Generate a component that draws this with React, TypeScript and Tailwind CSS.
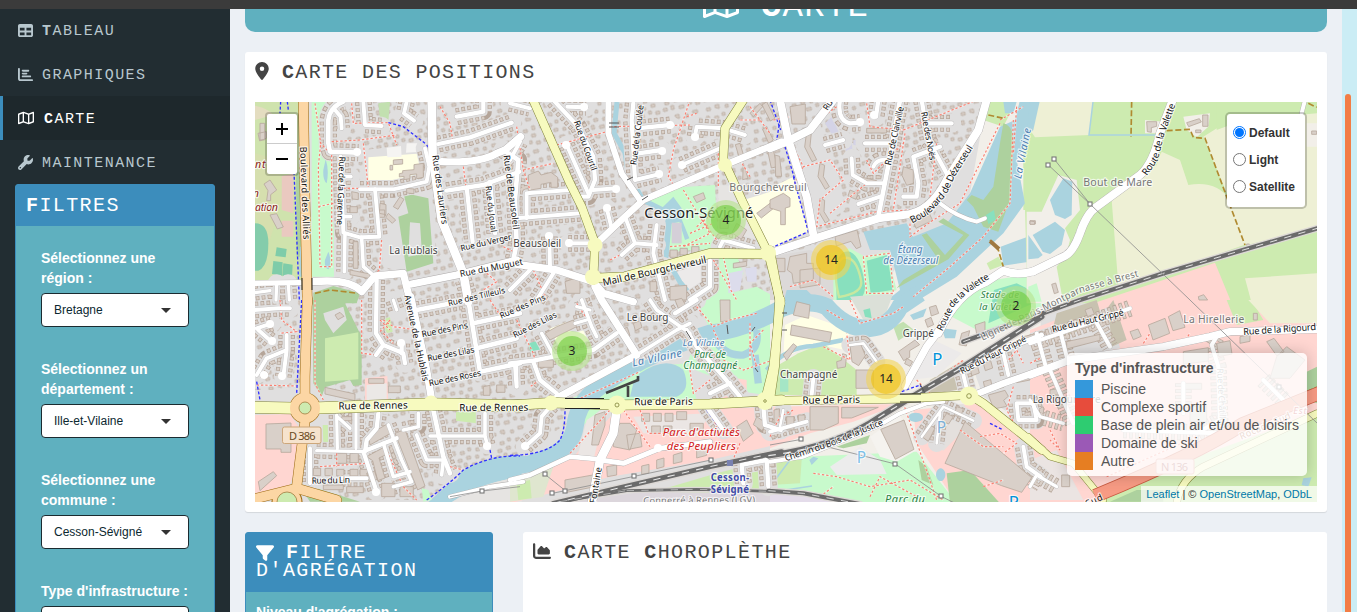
import React from "react";
import { FaTable, FaChartBar, FaRegMap, FaWrench, FaLocationDot, FaFilter, FaChartArea } from "react-icons/fa6";

type Pair = [string, string];
type Road = [string, number];
type Label = { t: string; p: number[]; s?: number; c?: string; i?: boolean; b?: boolean };
type Tile = {
  x: number;
  y: number;
  areas?: Pair[];
  buildings?: string;
  minor?: Road[];
  major?: Road[];
  yellow?: Road[];
  orange?: Road[];
  rail?: Road[];
  foot?: string;
  cycle?: string;
  track?: string;
  power?: string;
  labels?: Label[];
};

const PARK = "#c8facc";
const WOOD = "#add19e";
const GRASS = "#cdebb0";
const WATER = "#aad3df";
const FARM = "#eef0d5";
const LAND = "#f2efe9";
const RES = "#e0dfdf";
const RETAIL = "#ffd6d1";
const SCHOOL = "#ffffe5";
const PITCH = "#88e0be";
const BLUE = "#4d80b3";

const tiles: Tile[] = [
  {
    x: 250, y: 100,
    areas: [
      ["M0 0H160V545H0Z", "#cfe3ad"],
      ["M0 15Q50 20 70 45L15 60Z", "#e4ddc0"],
      ["M15 160L90 180L95 300L60 420L15 350Z", "#d6dfae"],
      ["M138 215H160V470H140Z", WOOD],
      ["M15 370Q55 370 55 430Q55 500 25 512L15 512Z", "#84ccab"],
      ["M80 442L110 447L107 472L76 468ZM70 483L98 487L96 527L66 522ZM100 490L128 494L126 531L97 527Z", "#7fcca9"],
      ["M95 228L130 222L130 340L95 330ZM95 362H130V410H95Z", "#eac9c0"],
      ["M185 5H280L235 70V150L252 168V530H185Z", PARK],
      ["M227 178Q238 210 230 250Q218 240 220 210ZM235 455Q246 480 236 508Q222 505 225 480ZM150 440H160V530H148Z", WATER],
      ["M340 150L540 130L545 240L430 265L335 262Z", RES],
      ["M385 270L545 260L560 500L470 520L400 500L390 420Z", RES],
      ["M355 172L520 160L532 240L430 258L355 242Z", SCHOOL],
      ["M460 278L535 295L550 490L470 515L445 350L475 340Z", WOOD],
      ["M480 367L510 370L516 462L475 470Z", RES],
      ["M385 10L420 5L415 65L390 60Z", "#c2e0b0"],
      ["M190 578L250 558L330 580L320 610L190 610Z", WOOD],
      ["M410 143L453 138L455 170L412 172ZM470 130L525 130L510 155L468 158Z", "#f5f4f2"],
    ],
    buildings: "M430 180l28 -2v14l-28 2zM458 212l34 -3v-15l28 -4v42l-20 4v-14l-20 2v12l-18 3v-10l-14 2v-10l10 -2zM420 196h8v14h-8zM30 70h14v50h-14zM24 100l25 -5v20l-20 8zM60 240l20 30l-18 14v18h-12l4 -30l-12 -20zM450 290l12 8l-18 30l-14 -8zM415 340l22 20l-10 10l-20 -18zM390 310l18 4v30l-20 -4zM470 265l22 2v14l-22 -2zM305 275l20 4v20l-18 -2zM300 320h22v18h-22zM60 345l20 -4l20 40l-18 6zM310 425h14v80h-14zM300 510l60 12v14l-60 -12zM380 330l24 0v22h-24z",
    minor: [
      ["M235 130L235 60Q240 20 280 5M235 130L240 155L325 158", 14],
      ["M255 30L272 50L275 85M340 5L345 75L395 78M470 5L462 40L492 62", 12],
      ["M330 268H430L530 245L538 200L525 145", 12],
      ["M375 268L388 410L330 412L280 398L272 170", 12],
      ["M285 400L283 515M335 412L340 500L375 530M275 230H303M272 350H302", 11],
      ["M590 272L700 255L808 215M650 262L668 425M720 245L735 400", 13],
      ["M565 132L660 112L785 68M620 50L700 35L700 5", 13],
      ["M15 578L60 572M80 550L78 600M115 550L118 600", 10],
      ["M760 150L805 180L795 300L800 430L790 480", 14],
    ],
    major: [
      ["M545 0L548 170L575 360L640 520L655 605", 26],
      ["M575 185Q690 190 740 160L765 150L812 110", 22],
      ["M190 545Q300 535 335 575L375 528L460 520L482 610", 22],
      ["M485 552L620 525L800 480", 22],
      ["M0 550L150 548", 16],
    ],
    orange: [["M160 0L165 300L172 610", 28]],
    foot: "M195 10L212 130L245 165V500H210L205 200L212 130M245 125L330 120L440 105M305 10L310 70L415 68L440 135M340 130L350 220L355 265M280 265L330 265M395 420L388 510L350 545M570 20L600 70L608 120M640 200L648 260M600 420L620 470M205 320L250 310M710 520L740 545L700 570M760 440L790 455",
    cycle: "M92 5L90 40M112 5L115 30M132 215L148 600M415 68L460 80L525 130M530 135L548 160",
    track: "M195 580L240 570L325 580",
    labels: [
      { t: "Boulevard des Alliés", p: [160, 140, 170, 418], s: 28 },
      { t: "Rue de la Garenne", p: [277, 170, 270, 375], s: 26 },
      { t: "Rue des Lauriers", p: [556, 165, 585, 372], s: 27 },
      { t: "Rue de Beausoleil", p: [770, 165, 799, 388], s: 27 },
      { t: "Rue du Joual", p: [715, 258, 732, 396], s: 25 },
      { t: "Rue du Verger", p: [632, 445, 784, 410], s: 25 },
      { t: "Rue du Muguet", p: [630, 522, 818, 484], s: 27 },
      { t: "Rue des Tilleuls", p: [594, 610, 765, 570], s: 25 },
      { t: "La Hublais", p: [418, 452, 563, 452], s: 30, c: "#444" },
      { t: "nt", p: [15, 193, 47, 193], s: 32, c: "#8b1a1a", i: true },
      { t: "n", p: [8, 280, 24, 280], s: 32, c: "#8b1a1a", i: true },
      { t: "ation", p: [15, 322, 84, 322], s: 32, c: "#8b1a1a", i: true },
      { t: "Beausoleil", p: [790, 430, 933, 430], s: 30, c: "#444" },
    ],
  },
  {
    x: 250, y: 300,
    areas: [
      ["M188 0H280L335 110L335 255L310 258L300 240L225 262L215 290L190 250Z", WOOD],
      ["M225 115L325 97V238L225 245Z", GRASS],
      ["M220 40L280 20L290 60L250 100L225 60Z", RES],
      ["M15 345L120 342L145 380L140 500L110 580L15 600Z", RETAIL],
      ["M155 500L170 470L190 562L330 605H180L150 560Z", WOOD],
      ["M385 60L420 52L428 95L388 105ZM218 375L240 375L250 430L220 430ZM618 335L685 335L680 370L618 362Z", GRASS],
      ["M345 235L412 228L415 310L345 312Z", "#ffd6d1"],
      ["M350 255L410 250V305L350 310Z", "#ebe8e6"],
      ["M530 610Q600 550 640 510Q720 465 815 465V535Q700 540 600 610Z", WATER],
      ["M600 610Q700 545 815 530V610Z", "#e6e4e2"],
      ["M515 565L535 570L545 600L520 605Z", PARK],
    ],
    buildings: "M48 372l75 -3v88h-30v-10h-45zM25 545l45 -30l10 12l-50 45zM255 45l15 -8l12 12l-18 10zM225 262l90 20v20l-90 -20zM356 236h46v14h-46zM415 258h36v20h-36zM480 375l20 -5v20l-18 5zM355 405l60 -35l15 25l-70 40zM350 470l55 -30l12 20l-30 14l18 60l-22 8l-15 -60zM435 400l30 -12l60 170l-22 12l-20 -50zM260 460l30 0v30h-30zM300 460h25v28h-25zM190 505h22v22h-22zM225 505h22v22h-22zM260 508h22v20h-22zM300 508h24v20h-24zM330 508h24v20h-24zM220 555h60v14h-60zM290 560h50v18h-50zM395 550l40 0v40h-40zM450 560h40v30h-40zM350 520l24 -6l8 24l-24 8zM275 350h30v12h-30zM700 260l20 -4v30h-20zM740 255h25v22h-25z",
    minor: [
      ["M380 -60L378 100L400 135L460 160L465 190M378 165L400 135M455 160V130", 13],
      ["M500 30L655 0L690 215L810 190M670 70L810 40M680 145L800 115M660 0L640 -60", 14],
      ["M260 345L262 445M200 452L340 455M318 340V445M262 350L300 385", 10],
      ["M345 455L350 420L380 385L385 340M345 452L440 415M340 455L365 530L380 575", 13],
      ["M415 375L455 480L485 545L430 560M400 430L430 530L480 515", 11],
      ["M550 330L580 470L600 520", 14],
      ["M500 405L530 480L580 480L575 525M540 408H705V340M705 408L712 435M460 390L505 380V340", 11],
      ["M180 445V550M275 535H350", 12],
      ["M15 30L85 25L120 25M20 85L65 70M25 90L65 125", 12],
      ["M110 105V150L50 175L20 225M110 150L100 230", 12],
      ["M430 0L440 30M800 190L800 250", 10],
    ],
    major: [
      ["M482 -10L530 210L545 300", 22],
      ["M600 590L720 560L820 545", 12],
    ],
    orange: [["M172 -5L165 230L165 325L165 365L150 480L140 560L110 600M20 595L140 565L260 600", 28]],
    yellow: [["M0 322L165 325L545 312L815 318", 34]],
    foot: "M195 0L195 250L220 300M335 0L335 160L380 165M90 0L95 60L140 95L90 100M400 60L430 80L500 90M400 100L430 130M20 255L140 258M210 500L350 490L380 560M260 460V500M340 455L400 430L460 560L500 600M600 500L640 510M20 590L70 580M720 0L760 60M390 60L420 90M420 60L390 95",
    cycle: "M155 0L140 280M20 245L30 300M530 600Q600 550 640 510Q720 465 810 468M720 450L725 475",
    power: "M600 590L697 573L810 560",
    labels: [
      { t: "Avenue de la Hublais", p: [472, -15, 528, 243], s: 27 },
      { t: "Rue des Pins", p: [515, 103, 653, 75], s: 26 },
      { t: "Rue des Lilas", p: [532, 175, 673, 148], s: 26 },
      { t: "Rue des Roses", p: [537, 250, 693, 218], s: 26 },
      { t: "Rue des Pins", p: [750, 48, 885, -10], s: 25 },
      { t: "Rue de Rennes", p: [265, 318, 473, 315], s: 30 },
      { t: "Rue de Rennes", p: [628, 323, 835, 322], s: 30 },
      { t: "Rue du Lin", p: [185, 542, 300, 539], s: 26 },
    ],
  },
  {
    x: 510, y: 100,
    areas: [
      ["M405 300L510 262L615 255L625 445L480 455L465 340Z", PARK],
      ["M610 475L680 465L700 520L660 600H600Z", PARK],
      ["M455 325L490 290L515 325L512 350L538 415L525 420L508 365L485 372L475 475L462 470L460 380L470 350Z", WATER],
      ["M485 368H515V430H485Z", "#d4cfd8"],
      ["M490 520L600 480L595 560L540 600Z", "#eceaea"],
      ["M700 300L815 265V440H775Z", SCHOOL],
      ["M655 520L700 510L690 570L655 580ZM705 505L740 500V545H712Z", "#dcdcec"],
      ["M660 580L740 560L812 600V620H640Z", PARK],
      ["M625 255L690 260L755 420L625 440Z", "#e6e4e2"],
    ],
    buildings: "M55 225l30 -12l8 12l30 -8l20 15v30h-20v-15l-30 6v12l-38 6zM630 355h25v30h-25zM680 370l30 20l-16 28l-28 -20zM770 5l25 50l-14 8l-25 -48zM720 40l30 -30l8 10l-28 30zM690 130l12 40l-14 4l-12 -40zM700 190l14 45l-16 4zM770 80l20 40l-14 10l-18 -42zM790 150l12 50l-18 4l-10 -46zM740 340l40 -30l12 14l-38 30zM480 560l50 -4v44h-50zM165 545l45 -15v50h-40zM480 450h22v22h-22zM510 445h22v20h-22zM545 440h22v20h-22zM420 545h20v30h-20zM670 490l40 -6v14l-40 6zM550 290l30 -12l6 18l-26 12z",
    minor: [
      ["M130 0L205 80L250 170L255 240L235 290L215 290", 13],
      ["M170 135L235 280M250 270L320 265M172 20L228 22M0 10L60 25", 12],
      ["M50 355V280L180 270M20 355L210 340M118 410L120 500M175 430L240 430", 12],
      ["M290 325L305 385M345 350L375 430L440 435M335 465L375 430M440 375L430 460L465 600", 12],
      ["M370 10L365 60L375 240L450 222M380 85L480 75M385 160L455 150", 13],
      ["M515 195L630 145M555 110L560 80L640 85L705 105", 12],
      ["M0 180L30 125M0 570L60 510M80 600L130 520M630 440L640 420L730 445M600 480L600 560L540 600", 12],
    ],
    major: [
      ["M295 0V100L335 220L390 300", 18],
      ["M255 435L345 350L400 300L620 205L815 125", 20],
      ["M0 490L140 510L250 545L280 580L370 605", 22],
    ],
    yellow: [
      ["M65 -10L180 250L215 320L255 430L250 540", 24],
      ["M250 535L345 530L600 460L780 462", 27],
      ["M700 0L645 85L640 180L700 310L775 460L812 610", 24],
    ],
    foot: "M140 135L290 95M20 80L40 210L60 270M40 210L130 190M300 80L540 75M540 0L490 150L475 230L500 270M625 160L625 260M520 270L600 400L520 440M570 350L620 420M540 400L610 370M480 440L600 430M720 20L780 100M750 60L690 60M300 480L330 465M70 510L110 600M610 480L680 600M560 380L620 330M640 470L660 560M530 50L560 40M690 180L720 230",
    cycle: "M780 0L812 90",
    labels: [
      { t: "Rue du Courtil", p: [200, 62, 253, 210], s: 26 },
      { t: "Rue de la Coulée", p: [370, 195, 392, 15], s: 26 },
      { t: "Mail de Bourgchevreuil", p: [278, 548, 588, 478], s: 30 },
      { t: "Cesson-Sévigné", p: [403, 338, 730, 338], s: 44, c: "#222" },
      { t: "Bourgchevreuil", p: [658, 262, 890, 262], s: 32, c: "#777" },
    ],
  },
  {
    x: 510, y: 300,
    areas: [
      ["M560 0L815 -20L800 290L700 275L620 235L530 200L545 150L480 140L600 90Z", PARK],
      ["M175 300L380 205L530 190L560 300L290 312L210 385L195 380Z", PARK],
      ["M190 470L320 330L815 322V430L600 480L300 530L120 580L0 610V560Z", RETAIL],
      ["M680 235L710 240V290L600 300V280Z", "#ffd6d1"],
      ["M330 605L620 520L815 470V605Z", GRASS],
      ["M0 545L130 500L100 590L0 605Z", "#dfe6cf"],
      ["M150 610L400 575L815 580V610Z", "#dcd6dc"],
      ["M390 220Q470 165 520 210Q545 270 500 290H360L370 250Z", WATER],
      ["M95 95L210 50L240 120L120 170Z", SCHOOL],
      ["M55 130L95 120L97 155L62 160Z", PITCH],
      ["M500 20L545 0V110L510 70Z", "#dcdcec"],
      ["M230 360L290 320L250 480H200ZM370 350L600 340L560 410L400 400Z", "#ebe6e4"],
      ["M20 550L60 540L65 595L25 600Z", GRASS],
    ],
    buildings: "M105 100l35 -20l50 -20l10 20l-80 40zM85 180h45v22h-45zM330 90l22 -8l8 25l-20 10zM370 70l20 -8l6 20l-20 10zM495 0l20 -5l12 20l-22 10zM630 0h30v60l-28 6zM255 345l30 -10v40l-20 60h-20zM310 400l20 -30l30 0l20 20l-20 60l-50 -10zM350 405l40 -5l6 40l-40 8zM395 340h24v24h-24zM430 340h24v24h-24zM465 340h24v24h-24zM500 335h30v24h-30zM425 378h26v22h-26zM460 378h26v22h-26zM165 540l100 -18v36l-100 20zM290 500l30 -5v30l-28 5zM440 480l22 -6v26l-22 6zM490 465l26 -8v28l-26 6zM560 450l30 -8v24l-30 8zM680 380l30 -20l20 40l-30 24zM640 390l30 -6v22h-30zM740 350l30 20l-14 22l-26 -18zM395 498l22 -5v26l-22 4zM540 370h40v20h-40zM770 470h24v30h-24z",
    minor: [
      ["M0 190L70 182L130 170L250 150L320 100M70 185L90 240L140 280M15 190L20 260", 13],
      ["M95 100L130 165M215 0L245 80L260 110", 11],
      ["M125 315L95 350L90 400L45 440", 12],
      ["M380 165L500 90L540 70M420 0L440 30L540 100", 11],
      ["M495 40L560 0M530 90L560 140L640 230L690 290M600 280L660 250", 13],
      ["M760 320L765 375L812 390M590 320L640 390M700 550L695 495L770 480L775 560", 13],
      ["M195 70L230 60M200 20L240 30", 10],
    ],
    major: [
      ["M130 300L380 165L275 0L255 -40", 22],
      ["M320 330L310 400L270 480L245 610", 26],
      ["M270 480L340 490L450 445L600 425", 15],
      ["M0 540L60 525L180 470L270 478", 14],
    ],
    yellow: [["M0 316L130 308L320 315L600 312L815 300", 29], ["M812 0L790 200L765 300", 24]],
    rail: [["M130 610L600 500L815 455", 15], ["M350 572L560 568L815 575M150 605L350 572", 8]],
    foot: "M20 60L70 160L90 240L60 260M200 300L390 215M180 460L300 330M340 330L420 440M390 330L415 400L600 400M560 20L610 80L660 60L740 40M540 210L550 280L600 240M640 180L700 210L790 180M720 70L720 180M200 10L260 100M600 330L620 380M610 90L640 150M690 430L660 500M760 90L720 130L740 200",
    cycle: "M0 466Q110 465 150 420Q165 390 165 330M590 330L630 385M180 590L260 590",
    power: "M105 523L166 572M127 580L373 529L603 480",
    labels: [
      { t: "Rue des Lilas", p: [10, 106, 138, 42], s: 25 },
      { t: "Le Bourg", p: [350, 53, 475, 53], s: 30, c: "#444" },
      { t: "La Vilaine", p: [367, 188, 515, 158], s: 33, c: BLUE, i: true },
      { t: "La Vilaine", p: [518, 128, 643, 128], s: 28, c: BLUE, i: true },
      { t: "Parc de", p: [552, 163, 648, 163], s: 30, c: "#2c8246", i: true },
      { t: "Champagné", p: [520, 198, 682, 198], s: 30, c: "#2c8246", i: true },
      { t: "Rue de Paris", p: [373, 305, 548, 304], s: 30 },
      { t: "Parc d'activités", p: [458, 396, 690, 396], s: 34, c: "#d22020", i: true },
      { t: "des Peupliers", p: [470, 438, 678, 438], s: 34, c: "#d22020", i: true },
      { t: "Cesson-", p: [602, 533, 717, 533], s: 29, c: "#3f4ba8", b: true },
      { t: "Sévigné", p: [602, 568, 717, 568], s: 29, c: "#3f4ba8", b: true },
      { t: "Connerré à Rennes (LGV)", p: [400, 602, 735, 599], s: 28, c: "#777" },
      { t: "Fontaine", p: [248, 610, 266, 502], s: 27 },
    ],
  },
  {
    x: 770, y: 100,
    areas: [
      ["M650 0H815V610H300L440 420L530 370L600 280Z", LAND],
      ["M655 0H740L700 80L640 60Z", GRASS],
      ["M760 120L815 60V330L760 330Z", GRASS],
      ["M280 395L410 370L430 410L530 370L600 280L690 80L735 60L750 0H812L790 100L740 180L765 310L700 400L560 530L430 610H340L390 570L360 450L300 450Z", WATER],
      ["M700 70Q735 80 730 140L720 300L685 395L640 380L610 320L590 300L605 285L640 300L670 260L690 130Z", WOOD],
      ["M455 405L470 400L525 465L580 405L505 365L520 355L598 405L535 478L380 565L400 540L505 478Z", WOOD],
      ["M0 265L70 230L115 395L0 445Z", SCHOOL],
      ["M180 460L240 445L285 470L350 455L380 570L300 600H190Z", PARK],
      ["M198 500Q205 450 240 455Q275 470 285 560Q285 600 240 615L200 610Z", PITCH],
      ["M290 482L352 465L368 570L302 580Z", PITCH],
      ["M648 345L672 330L677 360L655 372Z", PITCH],
      ["M692 440L815 395V480L700 497Z", WATER],
      ["M0 470L120 450L190 480L190 610H0Z", "#dcd9d8"],
      ["M50 570L110 570L150 610H40Z", WATER],
      ["M165 70L185 50L215 115L245 120L250 185L235 180L225 140L190 110ZM250 120L330 125V140L250 135ZM515 135L535 140V160L518 155Z", "#d4d3e6"],
      ["M700 5L740 5L730 40L705 40Z", WATER],
      ["M650 490L685 470L700 495L660 510Z", GRASS],
      ["M80 120L150 70L210 240L225 330L140 385L110 260Z", RES],
    ],
    buildings: "M0 300l40 -20l20 14v26l-14 4v50h-14v-40l-32 -10zM60 20l46 -8v60h-40zM110 95l14 4l-4 40l20 40l-14 6l-22 -44zM150 190l14 6l-4 34l18 30l-12 8l-22 -38zM150 295l14 6l-2 34l16 26l-12 8l-20 -34zM195 410l66 -20l12 50l-14 6l-16 -22l-44 14zM60 470l50 -10v30l20 0v50l-60 10l-4 -30l-14 -10zM15 475h30v40h-30zM90 510l60 -6v50l-60 10zM15 165l14 4l6 60h-18zM240 270l24 10l-6 18l-24 -10zM270 230l50 12v14l-50 -12zM430 365l50 -20l8 16l-50 24zM290 85l60 0v14h-60zM400 200l30 10v40l-20 6l-14 -30zM780 362h16v10h-16z",
    minor: [
      ["M210 0Q200 60 240 70L270 68M325 0L318 50M285 130H370", 13],
      ["M390 0L360 170L325 350", 14],
      ["M245 175L248 225L290 250L340 250M265 312L330 290M165 135L220 120M310 200Q320 175 355 180", 12],
      ["M455 0L475 120L530 220M440 290L445 250L430 170L510 140M400 290H440M475 70H545", 13],
    ],
    major: [
      ["M650 0L625 90L530 240Q480 340 400 345L325 355L120 420L0 460", 24],
      ["M30 0L55 120L110 290L132 415", 24],
      ["M0 145L50 125L120 90L190 0", 24],
      ["M790 514Q740 528 700 512L650 545Q560 580 505 700", 24],
      ["M510 310Q560 350 620 365L645 355", 12],
    ],
    yellow: [["M0 450L30 610", 24]],
    foot: "M200 20L60 120L100 200L180 180L220 240L150 300L140 380L320 335L420 330M405 100L370 330M400 90L620 0M690 70L570 310L490 360L420 410L420 370M730 60L720 310L640 410L540 500L430 590M500 130L480 290M290 10L300 80L400 90M180 340L290 250M10 60L60 50M280 470L290 580L370 580L360 460L280 470M100 200L70 260M60 560L130 540L190 590M740 20L730 160M570 200L610 100M690 60L760 20M290 180L310 220L400 130",
    cycle: "M70 230L115 395L0 445M30 60L20 120M45 140L75 240",
    track: "M655 45L700 55M660 420L685 450L700 500",
    labels: [
      { t: "Ru", p: [165, 28, 182, 2], s: 26 },
      { t: "Rue de Clairville", p: [353, 195, 392, 20], s: 27 },
      { t: "Rue des Noës", p: [462, 35, 489, 180], s: 26 },
      { t: "Boulevard de Dézerseul", p: [422, 362, 470, 335, 520, 280, 545, 225, 602, 135], s: 29 },
      { t: "La Vilaine", p: [742, 236, 772, 85], s: 31, c: BLUE, i: true },
      { t: "Étang", p: [383, 448, 458, 448], s: 30, c: BLUE, i: true },
      { t: "de Dézerseul", p: [340, 483, 505, 483], s: 30, c: BLUE, i: true },
      { t: "Route de la Valette", p: [508, 690, 545, 612, 590, 568, 656, 525], s: 28 },
    ],
  },
  {
    x: 770, y: 300,
    areas: [
      ["M0 0H812V610H0Z", LAND],
      ["M45 75L110 45L240 90L225 150L130 130L40 175Z", SCHOOL],
      ["M85 160L160 130L260 210L260 285H0V210Z", GRASS],
      ["M0 320L390 312L250 365L120 400L0 445Z", RETAIL],
      ["M430 330L620 310L815 460V610H560L440 430Z", RETAIL],
      ["M600 180L815 100V400L640 290Z", RES],
      ["M480 240L580 180L590 265L470 285Z", "#c8c2b0"],
      ["M420 240L480 115L575 160L500 230Z", "#eceaea"],
      ["M90 470L440 455L560 610H0V480Z", PARK],
      ["M0 478L95 480L90 550L0 555Z", GRASS],
      ["M0 560L200 590L300 615H0Z", "#e4dcea"],
      ["M530 520L600 510L690 610H540Z", WOOD],
      ["M445 480L470 500L490 555L455 540ZM200 440L300 405L290 430L220 445Z", WOOD],
      ["M370 80L400 65L432 90L385 122Z", "#c2e0b0"],
      ["M180 500L270 440L330 480L350 522L200 525Z", "#ececec"],
      ["M300 410L390 345L440 450L380 485L330 470Z", "#f5f3ef"],
      ["M448 410L520 318L580 312L612 360L520 452Z", "#e4e0dd"],
      ["M545 50L605 -50L800 -80L830 10L650 105Z", PARK],
      ["M655 70L672 -30L740 -50L800 -20L790 10Z", PITCH],
      ["M240 -10L370 -20L340 60L280 60Z", "#dbe0d8"],
      ["M280 30L300 25L305 55L285 50Z", PITCH],
      ["M30 235L55 232V275L30 275Z", "#a5e6c6"],
      ["M437 338a22 14 0 1 0 .1 0ZM512 505a14 19 0 1 0 .1 0ZM515 85L560 90L555 115L525 115ZM420 45L470 25L460 50L430 60ZM130 470L145 475L125 495L118 480Z", WATER],
    ],
    buildings: "M65 75l120 22l-6 30l-118 -22zM80 5l40 10l-4 40l-46 -10zM40 165l30 -34l10 8l-30 42zM240 135l30 -8l16 40l-20 30l-20 -12zM200 185l14 -4l4 -20l12 4l-4 36l-24 4zM258 210h52v55h-52zM120 320h85v50l-45 20h-40zM215 322h110l-80 32h-30zM332 388l70 -28l30 88l-56 30zM385 155l50 -35l14 14l-30 18v20l-18 10zM478 22l20 -6l8 24l-22 8zM465 60l18 -8l8 22l-18 8zM410 175l18 10l-8 14l-16 -8zM575 100l24 -8l-10 46l-22 -4zM525 490l60 -125l200 168l-30 44l-60 -20zM655 285l50 -14l10 18l-14 12l10 18l-40 8zM640 245l22 -6l4 18l-22 6zM675 250l22 -6l4 18l-22 6zM600 205l22 -8l6 22l-22 8zM640 190l22 -8l6 22l-22 8zM470 370l25 14l-20 40l-20 -14zM530 340l20 10l-14 22l-20 -10zM615 75l30 -10v30l-24 12zM12 330l16 -4v40l-16 4zM50 350h22v40h-22zM85 345h20v20h-20zM740 230l40 -10v20l-40 8zM560 320l20 6l-8 26l-20 -6zM760 110l40 -10v20l-40 10z",
    minor: [
      ["M125 285L130 235M0 395L110 365M580 225L590 265M700 160L715 225", 12],
      ["M740 310L790 310L800 360H745L740 310M760 440L770 500L812 530", 12],
      ["M240 135L280 130L320 185M455 410L520 320L610 362M510 340L500 430M40 330L30 380", 8],
    ],
    major: [
      ["M405 258L470 140L508 90", 22],
      ["M0 485L100 470L320 380L390 340L470 310L520 305", 12],
      ["M620 282L700 250L815 210", 20],
      ["M575 215L700 150L815 105", 14],
    ],
    yellow: [["M28 -5L15 200L0 300", 24], ["M0 302L390 296L600 285L640 310L815 450", 24]],
    rail: [["M-5 467Q200 440 330 350L460 270L580 200L815 50", 17], ["M-5 572L100 580L270 612", 12]],
    foot: "M240 0L270 70L370 40L400 20M160 140L240 180L230 100M170 30L220 60M440 240L480 280M130 520L200 530L300 560L420 540L520 600M300 590L330 530L440 590M400 310L500 600M570 390L640 440L700 440M630 410L690 400L740 430L700 460M700 200L740 150L760 190M730 260L710 330L760 420M500 240L580 180M0 410L30 350L70 330M640 560L700 540M150 590L190 560",
    cycle: "M395 275L450 255L465 285M400 335L490 305M660 370L700 390",
    power: "M0 435L95 418M150 435L376 492L515 590L560 612",
    labels: [
      { t: "Champagné", p: [30, 223, 202, 223], s: 30, c: "#444" },
      { t: "Grippé", p: [398, 101, 492, 101], s: 30, c: "#444" },
      { t: "Rue de Paris", p: [97, 301, 270, 298], s: 30 },
      { t: "Chemin du Bois de la Justice", p: [45, 475, 180, 430, 340, 364], s: 27 },
      { t: "Ligne de Paris-Montparnasse à Brest", p: [633, 113, 790, 38, 930, -32, 1107, -82], s: 29, c: "#777" },
      { t: "Rue du Haut Grippé", p: [572, 215, 766, 114], s: 26 },
      { t: "Parc du", p: [345, 597, 465, 597], s: 33, c: "#2c8246", i: true },
      { t: "Stade de", p: [632, -17, 747, -17], s: 29, c: "#2c8246", i: true },
      { t: "la Valette", p: [628, 20, 750, 20], s: 29, c: "#2c8246", i: true },
      { t: "P", p: [487, 178, 516, 178], s: 50, c: "#0092da" },
      { t: "P", p: [500, 384, 528, 384], s: 46, c: "#7cb0d8" },
      { t: "P", p: [260, 472, 288, 472], s: 46, c: "#7cc0e8" },
      { t: "P", p: [716, 605, 745, 605], s: 50, c: "#0092da" },
    ],
  },
  {
    x: 1030, y: 100,
    areas: [
      ["M0 0H862V610H-10V500L-20 150L0 120Z", GRASS],
      ["M15 0H190L178 105L15 112L0 90Z", FARM],
      ["M0 0H30L10 90L-10 110Z", WATER],
      ["M395 155L450 180L475 255Q560 240 600 300L640 320L650 432L400 520L265 555L245 300L300 250L380 195Z", FARM],
      ["M520 110L600 60L862 30V385L650 435L595 290Z", FARM],
      ["M560 0H862V40L640 60L560 90Z", GRASS],
      ["M345 60L400 65L405 100L345 100ZM460 50L540 40L535 80L500 112L470 90ZM830 70H862V140H830Z", LAND],
      ["M35 335L85 225L140 240L150 330L105 385L120 420L110 460L80 500L100 610H-10V335Z", LAND],
      ["M60 300L100 235L127 245L125 345L105 357L75 345ZM8 405L75 365L105 390L95 435L60 462L38 455ZM-5 405L38 465L25 475L-5 478Z", WATER],
      ["M190 610L400 540L555 488L605 610Z", RETAIL],
      ["M645 535L862 520V610H665Z", FARM],
      ["M-5 560L20 550L35 605H-5Z", PARK],
    ],
    buildings: "M350 65l30 0v14l-16 4v14l-12 -2zM470 68l38 -12l6 10l-38 14zM518 45h16v34h-16zM497 90h16v8h-16zM65 553l12 -4l8 28l-12 4zM0 363l14 2v8l-14 0zM845 93h15v10h-15zM650 432h8v8h-8zM505 590l16 -6l12 16h-26z",
    major: [["M432 -10L390 100Q370 190 330 225L200 320Q170 340 150 400Q130 455 105 468L10 514", 24], ["M825 0L815 40", 12]],
    rail: [["M-200 725L150 600L400 520L862 385", 13]],
    track: "M305 5L303 110M410 92L480 88L490 112L525 115L590 290L645 435M835 10L860 22",
    power: "M73 178L181 313M55 195L181 313L480 600",
    labels: [
      { t: "Route de la Valette", p: [342, 222, 375, 175, 390, 110, 428, 8], s: 29 },
      { t: "Bout de Mare", p: [160, 248, 367, 248], s: 32, c: "#777" },
    ],
  },
  {
    x: 1030, y: 300,
    areas: [
      ["M0 90L230 0H862V610H0Z", RETAIL],
      ["M0 100L240 20L270 145L120 175L0 220Z", RES],
      ["M80 40L200 0L215 50L130 100L60 120ZM235 20L250 0L290 120L245 140Z", "#c8c2b0"],
      ["M590 0H665L700 60L620 75Z", GRASS],
      ["M655 0H862V70L720 70Z", FARM],
      ["M200 610L500 470L700 400L862 330V610Z", GRASS],
      ["M830 215L862 200V310L830 300Z", WOOD],
      ["M240 605L320 570H400V605Z", WOOD],
      ["M820 535L845 532L835 560L815 555Z", WATER],
      ["M0 480L80 450L160 600H0Z", "#ebe4e2"],
    ],
    buildings: "M355 75l50 -20l14 45l-50 20zM415 50l34 -18l16 50l-36 10zM300 95l24 -8l10 22l-24 10zM710 125l22 -10l30 40l-22 12zM740 170l30 -30l55 40l-45 55l-60 0zM460 155l75 -12v40l-75 10zM560 130l40 -8l6 40l-40 8zM480 320l50 -5v50h-50zM95 525h24v35h-24zM630 110l30 -6v20l-30 6zM670 40l12 0v20h-12zM100 80l30 -8v18l-30 8zM150 70l34 -6v14l-30 10zM165 30l20 -8l8 20l-20 8zM110 125l100 -22v18l-100 26zM455 250h60v18h-60zM60 270l30 -5v20h-30z",
    minor: [
      ["M90 90L115 190M195 60L240 140M0 130L90 100L300 25M20 100L50 210M60 210L130 370", 12],
      ["M560 110L545 135L565 200L570 360L500 400M280 390L560 400M700 240L760 300M460 250V340", 12],
      ["M0 300L30 350L100 370M20 525L0 560M20 525L80 560", 10],
    ],
    major: [["M0 225L120 180L400 140L540 110L600 95L862 88", 22]],
    yellow: [["M-5 410L60 470L130 490L220 600", 18], ["M440 610Q450 540 520 500L862 340", 20]],
    orange: [],
    foot: "M230 530L500 410M60 390L90 450L60 420M340 130L360 100M450 140L480 100M0 190L40 170",
    power: "M480 0L748 260L862 370",
    track: "M830 275L860 262",
    labels: [
      { t: "Rue du Haut Grippé", p: [66, 88, 280, 36], s: 27 },
      { t: "La Hirellerie", p: [460, 57, 643, 57], s: 31, c: "#777" },
      { t: "Rue de la Rigourd", p: [640, 95, 858, 80], s: 28 },
      { t: "La Rigourdière", p: [8, 300, 212, 300], s: 30, c: "#444" },
      { t: "Rue de Châtillon", p: [570, 205, 580, 385], s: 26, c: "#888" },
      { t: "Rocade Sud", p: [630, 410, 780, 345], s: 28, c: "#a05030" },
      { t: "Est", p: [790, 331, 830, 331], s: 28, c: "#c03030", i: true },
      { t: "Sud", p: [168, 612, 216, 590], s: 27 },
    ],
  },
];

function Layer({ draw }: { draw: (t: Tile, i: number) => React.ReactNode }) {
  return (
    <>
      {tiles.map((t, i) => (
        <g key={i} transform={`translate(${t.x} ${t.y}) scale(.33333)`}>
          {draw(t, i)}
        </g>
      ))}
    </>
  );
}

function strokes(list: Road[] | undefined, color: string, extra = 0, dash?: string, offset = 0) {
  return (list ?? []).map(([d, w], i) => (
    <path key={i} d={d} stroke={color} strokeWidth={w + extra} strokeDasharray={dash} strokeDashoffset={offset} fill="none" strokeLinejoin="round" strokeLinecap={dash ? "butt" : "round"} />
  ));
}

function MapLabel({ l, id }: { l: Label; id: string }) {
  let len = 0;
  let d = `M${l.p[0]} ${l.p[1]}`;
  for (let i = 2; i < l.p.length; i += 2) {
    len += Math.hypot(l.p[i] - l.p[i - 2], l.p[i + 1] - l.p[i - 1]);
    d += `L${l.p[i]} ${l.p[i + 1]}`;
  }
  const common = {
    fontSize: l.s ?? 26,
    fill: l.c ?? "#111",
    fontStyle: l.i ? "italic" : "normal",
    fontWeight: l.b ? 700 : 400,
    stroke: "#ffffff",
    strokeOpacity: 0.7,
    strokeWidth: 7,
    strokeLinejoin: "round" as const,
    paintOrder: "stroke",
    textLength: len,
  };
  if (l.p.length === 4) {
    const a = (Math.atan2(l.p[3] - l.p[1], l.p[2] - l.p[0]) * 180) / Math.PI;
    return (
      <text {...common} dy=".35em" transform={`translate(${l.p[0]} ${l.p[1]}) rotate(${a})`}>
        {l.t}
      </text>
    );
  }
  return (
    <>
      <path id={id} d={d} fill="none" />
      <text {...common} textLength={len - 3} dy=".35em">
        <textPath href={`#${id}`}>{l.t}</textPath>
      </text>
    </>
  );
}

const pylons = [[1054, 159], [1048, 165], [1090, 204], [545, 474], [565, 491], [552, 493], [634, 476], [711, 460], [801, 439], [895, 464], [941, 496], [482, 491], [1279, 387]];

function StreetMap() {
  return (
    <svg className="block h-[400px] w-[1062px]" viewBox="255 102 1062 400" fontFamily="'Noto Sans', sans-serif">
      <defs>
        <pattern id="houses" width="41" height="33" patternUnits="userSpaceOnUse" patternTransform="rotate(-14)">
          <path d="M2 2h4v3h-4zM10 1h3v4h-3zM18 3h5v3h-5zM28 1h3v3h-3zM35 3h4v3h-4zM3 12h4v3h-4zM12 11h4v4h-2v-1h-2zM22 13h3v3h-3zM30 11h5v3h-5zM1 20h3v4h-3zM9 22h4v3h-4zM17 20h3v3h-3zM25 22h4v3h-4zM34 20h3v4h-3zM5 29h4v3h-4zM14 28h4v3h-4zM23 29h3v3h-3zM32 28h4v3h-4z" fill="#d6cbc3" stroke="#b9aa9f" strokeWidth=".7" />
        </pattern>
      </defs>
      <rect x="255" y="102" width="1062" height="400" fill={RES} />
      <path d="M335 102H985L930 225L820 240L770 290L600 370V410H590L500 465L440 500H335V300L340 250Z" fill="url(#houses)" />
      <path d="M255 300H300V390H255Z" fill="url(#houses)" />
      <Layer draw={(t) => (t.areas ?? []).map(([d, c], i) => <path key={i} d={d} fill={c} />)} />
      <g transform="translate(510 300) scale(.33333)" fill="none" stroke={WATER}>
        <path d="M-5 500Q180 480 195 380Q200 320 250 275Q300 235 400 180Q500 130 600 100Q700 90 815 25Q900 -5 950 20Q1010 90 1080 85Q1140 80 1170 20L1230 -20" strokeWidth="52" />
        <path d="M600 100Q640 170 700 165Q750 150 740 90M735 165L745 250" strokeWidth="22" />
        <path d="M770 210Q830 140 910 138L1000 120" strokeWidth="14" />
      </g>
      <path d="M617 102L614 133L625 153L628 173L643 200L663 210M670 265L680 282L695 300" fill="none" stroke={WATER} strokeWidth="5" />
      <path d="M1093 102L1089 135L1160 135M775 480L790 460M772 492L812 486" fill="none" stroke={WATER} strokeWidth="1.5" />
      <Layer draw={(t) => (t.x < 1000 ? strokes(t.minor, RES, 44) : null)} />
      <Layer draw={(t) => strokes(t.minor, "#b5a599", 38, "11 7")} />
      <Layer draw={(t) => strokes(t.minor, "#d9cfc7", 33, "7 11", -2)} />
      <Layer draw={(t) => (t.x < 1000 ? strokes(t.minor, "#b5a599", 17, "11 7") : null)} />
      <Layer draw={(t) => (t.x < 1000 ? strokes(t.minor, RES, 13) : null)} />
      <Layer draw={(t) => <path d={t.buildings} fill="#d9d0c9" stroke="#b8a99e" strokeWidth="2.5" />} />
      <Layer
        draw={(t) => (
          <g fill="none">
            <path d={t.foot} stroke="#ffffff" strokeWidth="6" strokeOpacity=".45" />
            <path d={t.foot} stroke="#fa8072" strokeWidth="3.6" strokeDasharray="7 6" />
            <path d={t.cycle} stroke="#3030ff" strokeWidth="4" strokeDasharray="9 6" />
            <path d={t.track} stroke="#b08a30" strokeWidth="5" strokeDasharray="18 8" />
          </g>
        )}
      />
      <Layer draw={(t) => strokes(t.rail, "#ddd9d6", 8)} />
      <Layer draw={(t) => strokes(t.minor, "#bdbbbb", 2)} />
      <Layer draw={(t) => strokes(t.major, "#adaaaa", 2)} />
      <Layer draw={(t) => strokes(t.minor, "#ffffff")} />
      <Layer draw={(t) => strokes(t.major, "#ffffff")} />
      <path d="M357 152h.1M584 107h.1M566 145h.1M616 189h.1M607 208h.1M569 243h.1M670 125h.1M662 151h.1M659 174h.1M682 165h.1M695 137h.1M487 446h.1M401 343h.1M272 341h.1M270 324h.1M264 375h.1M282 376h.1M525 446h.1M549 236h.1M376 492h.1M658 448h.1M860 122h.1M874 115h.1" stroke="#fff" strokeWidth="8" strokeLinecap="round" />
      <Layer
        draw={(t) => (
          <>
            {strokes(t.rail, "#6b6b6b")}
            {(t.rail ?? []).map(([d, w], i) => (
              <path key={i} d={d} fill="none" stroke="#e6e6e6" strokeWidth={w * 0.22} strokeDasharray="22 22" />
            ))}
          </>
        )}
      />
      <Layer draw={(t) => strokes(t.yellow, "#80833a", 3)} />
      <Layer draw={(t) => strokes(t.orange, "#9c6a12", 3)} />
      <circle cx="305" cy="408" r="15.5" fill="#9c6a12" />
      <circle cx="287" cy="502" r="15.5" fill="#9c6a12" />
      <Layer draw={(t) => strokes(t.yellow, "#f7fabf")} />
      <Layer draw={(t) => strokes(t.orange, "#fcd6a4")} />
      <circle cx="305" cy="408" r="15" fill="#fcd6a4" />
      <circle cx="305" cy="408" r="6" fill={GRASS} stroke="#a07c40" strokeWidth=".8" />
      <circle cx="287" cy="502" r="14.5" fill="#fcd6a4" />
      <circle cx="287" cy="502" r="10" fill={GRASS} stroke="#a07c40" strokeWidth=".8" />
      <g fill="#f7fabf">
        <circle cx="595" cy="245" r="7.5" />
        <circle cx="593" cy="277" r="8" />
        <circle cx="725" cy="165" r="7" />
        <circle cx="768" cy="253" r="8" />
        <circle cx="431" cy="403" r="7.5" />
        <circle cx="551" cy="403" r="7.5" />
        <circle cx="617" cy="405" r="9.500" />
        <circle cx="765" cy="401" r="9" />
        <circle cx="969" cy="396" r="9.500" />
      </g>
      <g fill="none" stroke="#80833a" strokeWidth=".8">
        <circle cx="617" cy="405" r="2" />
        <circle cx="765" cy="401" r="1.3" />
        <circle cx="969" cy="396" r="2.3" />
      </g>
      <path d="M1095 496Q1195 455 1243 424L1322 392" fill="none" stroke="#c85a40" strokeWidth="14" />
      <path d="M1095 496Q1195 455 1243 424L1322 392" fill="none" stroke="#f79b84" strokeWidth="12.6" />
      <path d="M606 393L638 380V376M628 386V397" fill="none" stroke="#444" strokeWidth="2.6" />
      <path d="M565 398.500H604M565 408.500H600M900 394H921M900 402H921M302 278V290M312 278V290" fill="none" stroke="#222" strokeWidth="1" />
      <path d="M990 241L999 249" stroke="#a07840" strokeWidth="4" />
      <path d="M609 123h10M609 127h10M627 180l6 -3M642 200l6 -4M686 331l5 8M727 325l1 9M752 331l3 -4M755 368l3 4M782 313h5M782 330h5M920 384l5 9" fill="none" stroke="#555" strokeWidth="1" />
      <path d="M839 297Q831 265 843 258Q856 255 861 280Q864 293 839 297Z" fill="none" stroke="#c8e8a0" strokeWidth="2.4" />
      <rect x="727" y="460" width="6" height="6" fill="#7981b0" />
      <Layer draw={(t) => <path d={t.power} fill="none" stroke="#8c8c8c" strokeWidth="2.4" />} />
      {pylons.map(([x, y]) => (
        <rect key={`${x}-${y}`} x={x - 2} y={y - 2} width="4" height="4" fill="#fff" stroke="#777" strokeWidth="1.1" />
      ))}
      <rect x="282.500" y="427" width="38.500" height="16.500" rx="2" fill="#f6e3cd" stroke="#cda77b" />
      <text x="289" y="439.500" fontSize="11" textLength="26.500" fill="#6b4a1c">D 386</text>
      <rect x="1156" y="459" width="38" height="15" rx="2" fill="#f9d8d0" stroke="#e08f80" />
      <text x="1161" y="470.500" fontSize="11" textLength="27" fill="#a04a4a">N 136</text>
      <Layer draw={(t, i) => (t.labels ?? []).map((l, j) => <MapLabel key={j} l={l} id={`lb-${i}-${j}`} />)} />
    </svg>
  );
}

function Title({ children, className = "" }: { children: React.ReactNode; className?: string }) {
  return <span className={`font-['Liberation_Mono',monospace] uppercase ${className}`}>{children}</span>;
}

function Cluster({ n, pos, green }: { n: number; pos: string; green?: boolean }) {
  return (
    <div className={`absolute flex size-10 items-center justify-center rounded-full ${pos} ${green ? "bg-[#b5e28c]/60" : "bg-[#f1d357]/60"}`}>
      <div className={`flex size-[30px] items-center justify-center rounded-full font-['Noto_Sans',sans-serif] text-[12px] text-[#222] ${green ? "bg-[#6ecc39]/60" : "bg-[#f0c20c]/60"}`}>{n}</div>
    </div>
  );
}

const menu = [
  { icon: FaTable, label: "Tableau", first: true },
  { icon: FaChartBar, label: "Graphiques" },
  { icon: FaRegMap, label: "Carte", active: true, first: true },
  { icon: FaWrench, label: "Maintenance" },
];

const filters = [
  { label: "Sélectionnez une région :", value: "Bretagne" },
  { label: "Sélectionnez un département :", value: "Ille-et-Vilaine" },
  { label: "Sélectionnez une commune :", value: "Cesson-Sévigné" },
  { label: "Type d'infrastructure :", value: "" },
];

const legend: { name: string; color: string }[] = [
  { name: "Piscine", color: "bg-[#3498db]" },
  { name: "Complexe sportif", color: "bg-[#e74c3c]" },
  { name: "Base de plein air et/ou de loisirs", color: "bg-[#2ecc71]" },
  { name: "Domaine de ski", color: "bg-[#9b59b6]" },
  { name: "Autre", color: "bg-[#e67e22]" },
];

function Sidebar() {
  return (
    <aside className="h-full w-[230px] shrink-0 bg-[#222d32]">
      <nav className="-mt-px">
        {menu.map(({ icon: Icon, label, active, first }) => (
          <a key={label} className={`flex h-11 items-center border-l-[3px] pl-[15px] ${active ? "border-[#3c8dbc] bg-[#1e282c] text-white" : "border-transparent text-[#b8c7ce]"}`}>
            <Icon className={active ? "size-4" : "size-[15px]"} />
            <Title className={`pt-0.5 text-[15px] leading-none tracking-[1.450px] ${active ? "ml-[10px]" : "ml-[9px]"}`}>
              <span className={first ? "font-bold" : ""}>{label[0]}</span>
              {label.slice(1)}
            </Title>
          </a>
        ))}
      </nav>
      <section className="mx-[15px] h-[500px] rounded-t-[3px] border border-[#3c8dbc] bg-[#5fb0bf]">
        <h3 className="h-[41px] bg-[#3c8dbc] pt-2 pl-[10px] text-white">
          <Title className="text-[20px] leading-[24px] tracking-[1.400px]">
            <b>F</b>iltres
          </Title>
        </h3>
        <div className="flex flex-col gap-8 px-[25px] pt-[22px] font-['Liberation_Sans',sans-serif]">
          {filters.map((f) => (
            <div key={f.label}>
              <div className="-mr-2 text-[14px] leading-5 font-bold text-white">{f.label}</div>
              <div className="mt-[5px] flex h-[34px] items-center justify-between rounded border border-[#1b2b30] bg-white pr-[17px] pl-3 text-[12px] text-[#0b2830]">
                {f.value}
                <span className="border-x-[5px] border-t-[5px] border-x-transparent border-t-[#333]" />
              </div>
            </div>
          ))}
        </div>
      </section>
    </aside>
  );
}

function MapPanel() {
  return (
    <div className="relative h-[400px] w-[1062px] overflow-hidden font-['Liberation_Sans',sans-serif]">
      <StreetMap />
      <Cluster n={4} green pos="left-[451px] top-[98px]" />
      <Cluster n={14} pos="left-[556px] top-[138px]" />
      <Cluster n={2} green pos="left-[741px] top-[184px]" />
      <Cluster n={3} green pos="left-[297px] top-[229px]" />
      <Cluster n={14} pos="left-[611px] top-[257px]" />
      <div className="absolute top-[10px] left-[10px] w-[34px] rounded border-2 border-black/20 bg-white bg-clip-padding">
        <div className="flex h-[30px] items-center justify-center border-b border-[#ccc]">
          <svg width="14" height="14" viewBox="0 0 14 14" stroke="#000" strokeWidth="2"><path d="M1 7H13M7 1V13" /></svg>
        </div>
        <div className="flex h-[30px] items-center justify-center">
          <svg width="14" height="14" viewBox="0 0 14 14" stroke="#000" strokeWidth="2"><path d="M1 7H13" /></svg>
        </div>
      </div>
      <div className="absolute top-[10px] right-[10px] flex h-[97px] w-[82px] flex-col gap-[11px] rounded-[5px] border-2 border-black/20 bg-white bg-clip-padding pt-[10px] pl-[6px] text-[12px] leading-[14px] font-bold text-[#333]">
        {["Default", "Light", "Satellite"].map((o, i) => (
          <label key={o} className="flex items-center gap-[3px]">
            <span className={`flex size-[13px] items-center justify-center rounded-full border ${i === 0 ? "border-[#0075ff]" : "border-[#767676]"}`}>
              {i === 0 && <span className="size-[9px] rounded-full bg-[#0075ff]" />}
            </span>
            <span className="pt-0.5">{o}</span>
          </label>
        ))}
      </div>
      <div className="absolute right-[10px] bottom-[26px] h-[123px] w-[240px] rounded-[5px] bg-white/80 px-2 pt-[6px] text-[14px] leading-[18px] whitespace-nowrap text-[#555] shadow-[0_0_15px_rgba(0,0,0,0.2)]">
        <h4 className="mb-[3px] font-bold">Type d'infrastructure</h4>
        {legend.map((l) => (
          <div key={l.name} className="flex">
            <i className={`mr-2 size-[18px] ${l.color}`} />
            {l.name}
          </div>
        ))}
      </div>
      <div className="absolute right-0 bottom-0 h-4 bg-white/70 px-[5px] text-[11px] leading-4 whitespace-nowrap text-[#333]">
        <span className="text-[#0078a8]">Leaflet</span> | © <span className="text-[#0078a8]">OpenStreetMap</span>, <span className="text-[#0078a8]">ODbL</span>
      </div>
    </div>
  );
}

export default function App() {
  return (
    <div className="flex h-[612px] w-[1357px] flex-col overflow-hidden bg-[#ecf0f5]">
      <div className="h-[9px] shrink-0 bg-[#3b3b3b]" />
      <div className="flex min-h-0 flex-1 overflow-hidden">
        <Sidebar />
        <main className="flex min-w-0 flex-1 flex-col px-[15px]">
          <header className="flex h-[23px] shrink-0 items-end justify-center overflow-hidden rounded-b-[10px] bg-[#5fb0bf] pb-3 text-white">
            <FaRegMap className="mr-[22px] size-[36px] shrink-0 translate-y-0.5" />
            <Title className="text-[34px] leading-[25px] tracking-[1.300px]">
              <b>C</b>arte
            </Title>
          </header>
          <section className="mt-5 h-[460px] shrink-0 rounded-[3px] bg-white px-[10px] pt-[8px] text-[#444] shadow-[0_1px_1px_rgba(0,0,0,0.1)]">
            <h3 className="mb-[18px] flex h-6 items-center">
              <FaLocationDot className="-mt-0.5 ml-[-2px] size-[18px]" />
              <Title className="ml-[11px] pt-0.5 text-[20px] leading-none tracking-[1.340px]">
                <b>C</b>arte des positions
              </Title>
            </h3>
            <MapPanel />
          </section>
          <div className="mt-5 flex gap-[30px]">
            <section className="h-[100px] w-[248px] rounded-t-[3px] border border-[#3c8dbc] bg-[#5fb0bf] text-white">
              <h3 className="flex h-[59px] flex-col bg-[#3c8dbc] px-[10px] pt-[11px] text-[20px] leading-[18px]">
                <span className="flex h-[18px] items-center">
                  <FaFilter className="mr-3 size-[18px]" />
                  <Title className="leading-[18px] tracking-[1.500px]">
                    <b>F</b>iltre
                  </Title>
                </span>
                <Title className="h-[18px] leading-[18px] tracking-[1.450px]">d'agrégation</Title>
              </h3>
              <p className="px-[10px] pt-[10px] font-['Liberation_Sans',sans-serif] text-[14px] leading-5 font-bold">Niveau d'agrégation :</p>
            </section>
            <section className="h-[100px] flex-1 rounded-t-[3px] bg-white px-[10px] pt-[8px] text-[#444]">
              <h3 className="flex h-6 items-center">
                <FaChartArea className="-mt-0.5 size-[18px]" />
                <Title className="ml-[13px] pt-0.5 text-[20px] leading-none tracking-[1.380px]">
                  <b>C</b>arte <b>C</b>horoplèthe
                </Title>
              </h3>
            </section>
          </div>
        </main>
        <div className="flex w-[15px] shrink-0 bg-[#cbedf5] pt-[85px] pl-[3px]">
          <div className="h-full w-[6px] rounded-t-[3px] bg-[#f27d45]" />
        </div>
      </div>
    </div>
  );
}
